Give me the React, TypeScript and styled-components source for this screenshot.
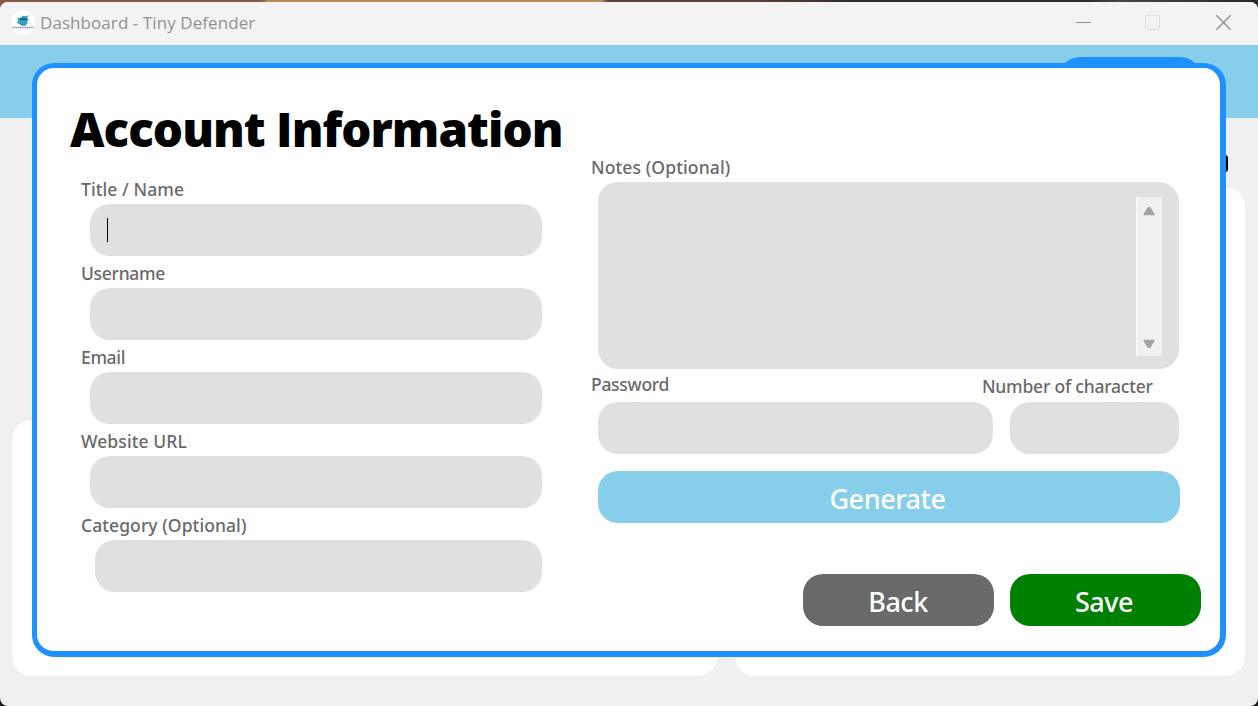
import React from "react";
import styled, { createGlobalStyle } from "styled-components";

const GlobalStyle = createGlobalStyle`
  * { box-sizing: border-box; }
  body { margin: 0; overflow: hidden; font-family: "Open Sans", "Noto Sans", sans-serif; }
`;

const Desktop = styled.div`
  width: 1258px;
  height: 706px;
  padding-top: 2px;
  background:
    linear-gradient(90deg, #855848 0 262px, #b88b5a 268px 602px, #5b4038 608px 760px, #332d2e 850px 1090px, #4a4546 1120px, #2b2829 1258px) 0 0 / 100% 12px no-repeat,
    #1f1c1c;
`;

const Window = styled.div`
  position: relative;
  display: flex;
  flex-direction: column;
  height: 704px;
  overflow: hidden;
  border-radius: 8px;
  background: #f0f0f0;
`;

const TitleBar = styled.header`
  display: flex;
  align-items: center;
  flex: 0 0 43px;
  padding: 0 26px 2px 11px;
  background: #f3f3f3;
`;

const WindowTitle = styled.span`
  flex: 1;
  margin-left: 5px;
  font-family: "Open Sans", sans-serif;
  font-size: 17px;
  line-height: 24px;
  letter-spacing: 0.07px;
  color: #929292;
`;

const Controls = styled.div`
  display: flex;
  align-items: center;
  gap: 53px;
`;

const TopBand = styled.div`
  display: flex;
  justify-content: flex-end;
  flex: 0 0 73px;
  padding: 12px 56px 0 0;
  background: #87ceeb;
`;

const BandButton = styled.div`
  width: 144px;
  height: 50px;
  border-radius: 22px;
  background: #1e90ff;
`;

const Board = styled.main`
  display: grid;
  grid-template-columns: 705px 510px;
  gap: 18px;
  flex: 1;
  align-items: end;
  padding: 0 13px 30px 12px;
`;

const Card = styled.section<{ $height: number }>`
  height: ${(p) => p.$height}px;
  border-radius: 20px;
  background: #fff;
`;

const RightStack = styled.div`
  display: flex;
  flex-direction: column;
  gap: 15px;
`;

const Knob = styled.div`
  align-self: flex-end;
  width: 40px;
  height: 17px;
  margin-right: 17px;
  border-radius: 3px;
  background: #000;
`;

const Dialog = styled.form`
  position: absolute;
  top: 61px;
  left: 32px;
  display: grid;
  grid-template-columns: 554px 610px;
  width: 1194px;
  height: 594px;
  border: solid #1e90ff;
  border-width: 5px 6px 6px 5px;
  border-radius: 22px;
  background: #fff;
`;

const LeftColumn = styled.div`
  display: flex;
  flex-direction: column;
  padding-left: 44px;
`;

const Heading = styled.h1`
  height: 104px;
  margin: 0 0 0 -11px;
  padding-top: 29px;
  font-family: "Open Sans", sans-serif;
  font-size: 47.5px;
  font-weight: 800;
  line-height: 64px;
  letter-spacing: -0.96px;
  white-space: nowrap;
  color: #000;
`;

const Label = styled.label<{ $height: number; $spacing?: number }>`
  display: block;
  height: ${(p) => p.$height}px;
  font-family: "Noto Sans", "Open Sans", sans-serif;
  font-size: 17.5px;
  font-weight: 500;
  line-height: 28px;
  letter-spacing: ${(p) => p.$spacing ?? 0}px;
  white-space: nowrap;
  color: #696969;
`;

const Field = styled.div`
  padding-top: 3px;
  height: 84px;
`;

const Input = styled.div<{ $width: number; $indent?: number }>`
  display: flex;
  align-items: center;
  width: ${(p) => p.$width}px;
  height: 52px;
  margin-left: ${(p) => p.$indent ?? 0}px;
  padding-left: 17px;
  border-radius: 20px;
  background: #e0e0e0;
`;

const Caret = styled.span`
  width: 1px;
  height: 24px;
  background: #000;
`;

const RightColumn = styled.div`
  display: flex;
  flex-direction: column;
  padding-top: 85px;
`;

const Notes = styled.div`
  display: flex;
  justify-content: flex-end;
  width: 581px;
  height: 187px;
  margin-left: 7px;
  padding: 15px 17px 13px 0;
  border-radius: 20px;
  background: #e0e0e0;
`;

const ScrollTrack = styled.div`
  display: flex;
  flex-direction: column;
  align-items: center;
  justify-content: space-between;
  width: 26px;
  padding: 9px 1px 7px 0;
  border-left: 1px solid #fff;
  background: #f0f0f0;
`;

const PasswordRow = styled.div`
  display: flex;
  height: 85px;
`;

const PasswordCell = styled.div<{ $width: number; $top: number }>`
  width: ${(p) => p.$width}px;
  padding-top: ${(p) => p.$top}px;
`;

const Button = styled.button<{ $width: number; $color: string; $nudge?: number }>`
  width: ${(p) => p.$width}px;
  height: 52px;
  padding: 3px ${(p) => p.$nudge ?? 0}px 0 0;
  border: 0;
  border-radius: 20px;
  background: ${(p) => p.$color};
  color: #fff;
  font-family: "Noto Sans", "Open Sans", sans-serif;
  font-size: 27px;
  font-weight: 500;
  line-height: 49px;
  letter-spacing: -0.45px;
`;

const GenerateRow = styled.div`
  display: flex;
  padding: 17px 0 0 7px;
`;

const Actions = styled.div`
  display: flex;
  gap: 16px;
  padding: 51px 0 0 212px;
`;

const Logo = () => (
  <svg width="24" height="24" viewBox="0 0 24 24">
    <circle cx="12" cy="12" r="12" fill="#fff" />
    <path d="M6.5 6.5l3 .5 2-2.2 3 .4 2.7-1-.8 2.8 1.3 2-1.5 1.2.3 2.5-2.5 1.2-4 .3-2.4-1.7-2-.3 1.5-2z" fill="#35a5c5" />
    <path d="M9 7.3h6.5v2H9z" fill="#23568c" />
    <path d="M9 12.5l2 1.5h4" stroke="#1c7fa4" fill="none" />
    <path d="M1.5 16.5h21" stroke="#4a4d83" strokeWidth="1.6" strokeDasharray="1.3 .5" opacity=".65" />
  </svg>
);

const Arrow = ({ down = false }: { down?: boolean }) => (
  <svg width="12" height="10" viewBox="0 0 12 10">
    <path
      d={down ? "M1.3 1.6h9.4L6.8 8h-1.6z" : "M1.3 8.4h9.4L6.8 2h-1.6z"}
      fill="#a3a3a3"
      stroke="#a3a3a3"
      strokeWidth="1.8"
      strokeLinejoin="round"
    />
  </svg>
);

const fields = [
  { label: "Title / Name", spacing: 0.09, active: true },
  { label: "Username", spacing: -0.3 },
  { label: "Email", spacing: -0.35 },
  { label: "Website URL", spacing: 0.1 },
  { label: "Category (Optional)", spacing: 0.08, inset: 5 },
];

export default function App() {
  return (
    <>
      <GlobalStyle />
      <Desktop>
        <Window>
          <TitleBar>
            <Logo />
            <WindowTitle>Dashboard - Tiny Defender</WindowTitle>
            <Controls>
              <svg width="17" height="17" viewBox="0 0 17 17">
                <path d="M1 8.5h15" stroke="#929292" />
              </svg>
              <svg width="17" height="17" viewBox="0 0 17 17">
                <rect x="0.5" y="1.5" width="14" height="14" rx="1" fill="none" stroke="#dedede" />
              </svg>
              <svg width="17" height="17" viewBox="0 0 17 17">
                <path d="M1.3 1.3l14.4 14.4M15.7 1.3L1.3 15.7" stroke="#8d8d8d" strokeWidth="1.3" />
              </svg>
            </Controls>
          </TitleBar>
          <TopBand>
            <BandButton />
          </TopBand>
          <Board>
            <Card $height={256} />
            <RightStack>
              <Knob />
              <Card $height={489} />
            </RightStack>
          </Board>
          <Dialog>
            <LeftColumn>
              <Heading>Account Information</Heading>
              {fields.map((f) => (
                <Field key={f.label}>
                  <Label $height={29} $spacing={f.spacing}>{f.label}</Label>
                  <Input $indent={9 + (f.inset ?? 0)} $width={452 - (f.inset ?? 0)}>
                    {f.active && <Caret />}
                  </Input>
                </Field>
              ))}
            </LeftColumn>
            <RightColumn>
              <Label $height={29} $spacing={0.12}>Notes (Optional)</Label>
              <Notes>
                <ScrollTrack>
                  <Arrow />
                  <Arrow down />
                </ScrollTrack>
              </Notes>
              <PasswordRow>
                <PasswordCell $width={391} $top={1}>
                  <Label $height={32} $spacing={-0.28}>Password</Label>
                  <Input $indent={7} $width={395} />
                </PasswordCell>
                <PasswordCell $width={197} $top={3}>
                  <Label $height={30} $spacing={-0.22}>Number of character</Label>
                  <Input $indent={28} $width={169} />
                </PasswordCell>
              </PasswordRow>
              <GenerateRow>
                <Button type="button" $width={582} $color="#87ceeb" $nudge={3}>Generate</Button>
              </GenerateRow>
              <Actions>
                <Button type="button" $width={191} $color="#696969" $nudge={1}>Back</Button>
                <Button type="button" $width={191} $color="#008000" $nudge={3}>Save</Button>
              </Actions>
            </RightColumn>
          </Dialog>
        </Window>
      </Desktop>
    </>
  );
}
